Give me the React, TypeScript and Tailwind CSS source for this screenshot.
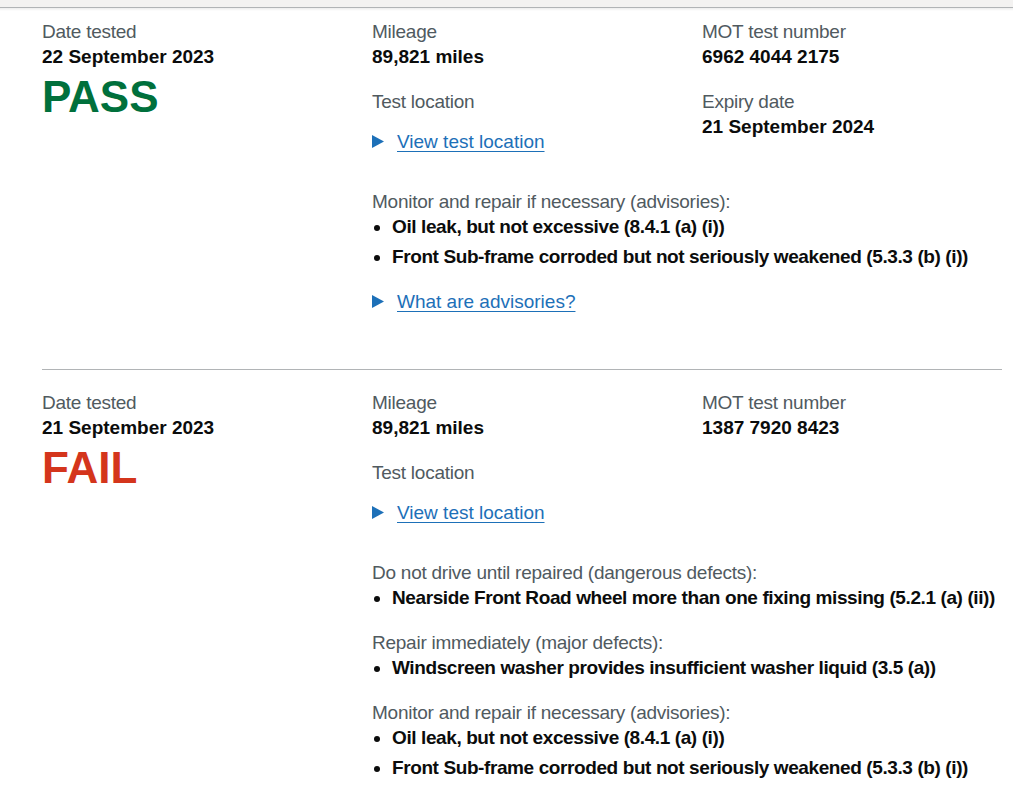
const font = "font-['Liberation_Sans',Arial,sans-serif]";

type Group = { title: string; items: string[] };

type Test = {
  date: string;
  result: 'PASS' | 'FAIL';
  mileage: string;
  number: string;
  expiry?: string;
  groups: Group[];
  showHelp?: boolean;
};

const tests: Test[] = [
  {
    date: '22 September 2023',
    result: 'PASS',
    mileage: '89,821 miles',
    number: '6962 4044 2175',
    expiry: '21 September 2024',
    showHelp: true,
    groups: [
      {
        title: 'Monitor and repair if necessary (advisories):',
        items: [
          'Oil leak, but not excessive (8.4.1 (a) (i))',
          'Front Sub-frame corroded but not seriously weakened (5.3.3 (b) (i))',
        ],
      },
    ],
  },
  {
    date: '21 September 2023',
    result: 'FAIL',
    mileage: '89,821 miles',
    number: '1387 7920 8423',
    groups: [
      {
        title: 'Do not drive until repaired (dangerous defects):',
        items: ['Nearside Front Road wheel more than one fixing missing (5.2.1 (a) (ii))'],
      },
      {
        title: 'Repair immediately (major defects):',
        items: ['Windscreen washer provides insufficient washer liquid (3.5 (a))'],
      },
      {
        title: 'Monitor and repair if necessary (advisories):',
        items: [
          'Oil leak, but not excessive (8.4.1 (a) (i))',
          'Front Sub-frame corroded but not seriously weakened (5.3.3 (b) (i))',
        ],
      },
    ],
  },
];

const Label = ({ children, className = '' }: { children: React.ReactNode; className?: string }) => (
  <div className={`text-[19px] leading-[25px] tracking-[-0.25px] text-[#505a5f] ${className}`}>{children}</div>
);

const Value = ({ children }: { children: React.ReactNode }) => (
  <div className="text-[19px] leading-[25px] font-bold text-[#0b0c0c]">{children}</div>
);

const Summary = ({ children, className = '' }: { children: React.ReactNode; className?: string }) => (
  <div className={`flex items-center text-[19px] leading-[25px] ${className}`}>
    <svg width="12" height="13" viewBox="0 0 12 13" className="mr-[13px] shrink-0 text-[#1d70b8]">
      <polygon points="0,0 12,6.5 0,13" fill="currentColor" />
    </svg>
    <a href="#" className="text-[#1d70b8] underline underline-offset-[3px] decoration-1">
      {children}
    </a>
  </div>
);

function TestCard({ test }: { test: Test }) {
  return (
    <div className="grid grid-cols-[330px_1fr]">
      {/* Left column */}
      <div>
        <Label>Date tested</Label>
        <Value>{test.date}</Value>
        <div
          className={`mt-[3px] text-[44px] leading-[50px] font-bold ${
            test.result === 'PASS' ? 'text-[#00703c]' : 'text-[#d4351c]'
          }`}
        >
          {test.result}
        </div>
      </div>

      {/* Right columns */}
      <div>
        <div className="grid grid-cols-[330px_1fr]">
          <div>
            <Label>Mileage</Label>
            <Value>{test.mileage}</Value>
            <Label className="mt-[20px]">Test location</Label>
            <Summary className="mt-[15px]">View test location</Summary>
          </div>
          <div>
            <Label>MOT test number</Label>
            <Value>{test.number}</Value>
            {test.expiry && (
              <>
                <Label className="mt-[20px]">Expiry date</Label>
                <Value>{test.expiry}</Value>
              </>
            )}
          </div>
        </div>

        {test.groups.map((g, i) => (
          <div key={g.title + i} className={i === 0 ? 'mt-[35px]' : 'mt-[20px]'}>
            <Label>{g.title}</Label>
            <ul className="pl-[20px] list-disc">
              {g.items.map((item, j) => (
                <li
                  key={item}
                  className={`text-[19px] leading-[25px] font-bold tracking-[-0.4px] whitespace-nowrap text-[#0b0c0c] ${
                    j > 0 ? 'mt-[5px]' : ''
                  }`}
                >
                  {item}
                </li>
              ))}
            </ul>
          </div>
        ))}

        {test.showHelp && <Summary className="mt-[20px]">What are advisories?</Summary>}
      </div>
    </div>
  );
}

export default function App() {
  return (
    <div className={`min-h-screen bg-white overflow-hidden ${font} text-[#0b0c0c]`}>
      <div className="h-[8px] bg-[#f3f2f1] border-b border-[#b1b4b6]" />
      <div className="h-[3px] bg-gradient-to-b from-[#ededed] to-white" />
      <main className="pl-[42px] pt-[8px]">
        <TestCard test={tests[0]} />
        <hr className="mt-[55px] w-[960px] border-0 border-t border-[#b1b4b6]" />
        <div className="pt-[20px]">
          <TestCard test={tests[1]} />
        </div>
      </main>
    </div>
  );
}
